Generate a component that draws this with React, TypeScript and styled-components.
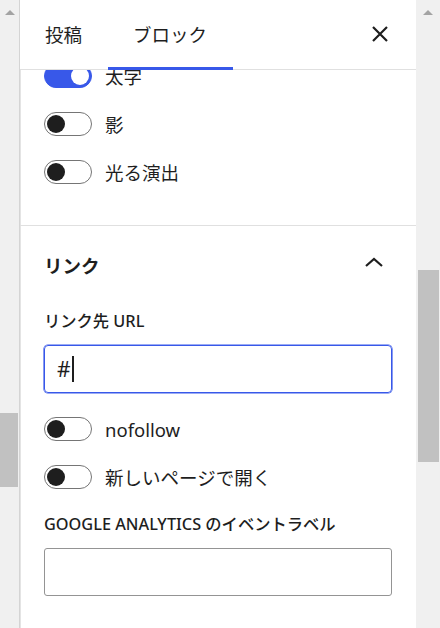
import styled, { createGlobalStyle } from 'styled-components';

const blue = '#3858e9';
const ink = '#1e1e1e';
const rule = '#e0e0e0';
const track = '#f0f0f0';
const thumb = '#c1c1c1';

const GlobalStyle = createGlobalStyle`
	html, body {
		margin: 0;
		padding: 0;
		background: #ffffff;
	}
	body {
		font-family: 'Noto Sans', 'Noto Sans CJK JP', sans-serif;
		color: ${ink};
	}
`;

const Page = styled.div`
	display: flex;
	width: 440px;
	height: 628px;
	overflow: hidden;
`;

const ScrollTrack = styled.div<{ $width: number }>`
	display: flex;
	flex-direction: column;
	align-items: center;
	width: ${(p) => p.$width}px;
	flex-shrink: 0;
	background: ${track};
`;

const Arrow = styled.div`
	margin-top: 10px;
	width: 0;
	height: 0;
	border-left: 5px solid transparent;
	border-right: 5px solid transparent;
	border-bottom: 5px solid #a3a3a3;
`;

const Thumb = styled.div<{ $top: number; $height: number; $inset: string }>`
	margin-top: ${(p) => p.$top}px;
	height: ${(p) => p.$height}px;
	align-self: stretch;
	margin-left: ${(p) => p.$inset};
	margin-right: 1px;
	background: ${thumb};
`;

const Panel = styled.aside`
	flex: 1;
	display: flex;
	flex-direction: column;
	background: #ffffff;
	border-left: 1px solid #d4d4d4;
	box-shadow: inset 1px 0 0 #e4e4e4;
	min-width: 0;
`;

const Header = styled.div`
	display: flex;
	align-items: stretch;
	height: 70px;
	flex-shrink: 0;
	box-shadow: inset 0 -1px 0 ${rule};
	position: relative;
	z-index: 1;
	background: #ffffff;
`;

const Tab = styled.button<{ $active?: boolean }>`
	border: 0;
	background: transparent;
	padding: 0 26px 2px 25px;
	font-family: inherit;
	font-size: 18.5px;
	color: ${ink};
	cursor: pointer;
	box-shadow: ${(p) => (p.$active ? `inset 0 -3px 0 ${blue}` : 'none')};
`;

const CloseButton = styled.button`
	margin-left: auto;
	width: 72px;
	border: 0;
	background: transparent;
	display: flex;
	align-items: center;
	justify-content: center;
	padding: 0 0 2px 0;
	cursor: pointer;
`;

const Body = styled.div`
	flex: 1;
	overflow: hidden;
`;

const Section = styled.section<{ $scrolled?: number }>`
	margin-top: ${(p) => (p.$scrolled ? -p.$scrolled : 0)}px;
	padding: 0 24px 29px;
	border-bottom: 1px solid ${rule};
`;

const LinkSection = styled.section`
	padding: 0 24px;
`;

const Row = styled.label`
	display: flex;
	align-items: center;
	gap: 13px;
	height: 48px;
	font-size: 18.5px;
	cursor: pointer;
`;

const Switch = styled.span<{ $on?: boolean }>`
	display: flex;
	align-items: center;
	justify-content: ${(p) => (p.$on ? 'flex-end' : 'flex-start')};
	box-sizing: border-box;
	width: 48px;
	height: 24px;
	padding: 0 2px;
	border-radius: 12px;
	border: 1px solid ${(p) => (p.$on ? blue : '#757575')};
	background: ${(p) => (p.$on ? blue : '#ffffff')};
	flex-shrink: 0;
`;

const Knob = styled.span<{ $on?: boolean }>`
	width: 18px;
	height: 18px;
	border-radius: 50%;
	background: ${(p) => (p.$on ? '#ffffff' : ink)};
`;

const TitleRow = styled.div`
	display: flex;
	align-items: center;
	justify-content: space-between;
	height: 78px;
	padding-right: 6px;
`;

const Title = styled.h2`
	margin: 0;
	font-size: 18.5px;
	font-weight: 700;
`;

const FieldLabel = styled.div<{ $gap: number }>`
	margin-top: ${(p) => p.$gap}px;
	height: 20px;
	line-height: 20px;
	font-size: 16.3px;
	font-weight: 500;
`;

const Field = styled.div<{ $focused?: boolean }>`
	display: flex;
	align-items: center;
	box-sizing: border-box;
	margin-top: 14px;
	height: 48px;
	padding: 0 12px;
	border-radius: ${(p) => (p.$focused ? 4 : 3)}px;
	border: 1px solid ${(p) => (p.$focused ? blue : '#949494')};
	box-shadow: ${(p) => (p.$focused ? `0 0 0 0.6px ${blue}` : 'none')};
	font-size: 21px;
`;

const Caret = styled.span`
	width: 2px;
	height: 26px;
	margin-left: 1px;
	background: ${ink};
`;

const Toggles = styled.div`
	margin-top: 12px;
`;

const ToggleRow = ({ label, on }: { label: string; on?: boolean }) => (
	<Row>
		<Switch $on={on}>
			<Knob $on={on} />
		</Switch>
		{label}
	</Row>
);

const App = () => {
	return (
		<Page>
			<GlobalStyle />
			<ScrollTrack $width={19}>
				<Arrow />
				<Thumb $top={398} $height={74} $inset="0px" />
			</ScrollTrack>
			<Panel>
				<Header>
					<Tab>投稿</Tab>
					<Tab $active>ブロック</Tab>
					<CloseButton aria-label="閉じる">
						<svg width="24" height="24" viewBox="0 0 24 24">
							<path d="M5 5 L19 19 M19 5 L5 19" stroke={ink} strokeWidth="2.2" fill="none" />
						</svg>
					</CloseButton>
				</Header>
				<Body>
					<Section $scrolled={18}>
						<ToggleRow label="太字" on />
						<ToggleRow label="影" />
						<ToggleRow label="光る演出" />
					</Section>
					<LinkSection>
						<TitleRow>
							<Title>リンク</Title>
							<svg width="24" height="24" viewBox="0 0 24 24">
								<path d="M4 13 L12 6 L20 13" stroke={ink} strokeWidth="2.2" fill="none" />
							</svg>
						</TitleRow>
						<FieldLabel $gap={7}>リンク先 URL</FieldLabel>
						<Field $focused>
							#<Caret />
						</Field>
						<Toggles>
							<ToggleRow label="nofollow" />
							<ToggleRow label="新しいページで開く" />
						</Toggles>
						<FieldLabel $gap={13}>GOOGLE ANALYTICS のイベントラベル</FieldLabel>
						<Field />
					</LinkSection>
				</Body>
			</Panel>
			<ScrollTrack $width={24}>
				<Arrow />
				<Thumb $top={255} $height={192} $inset="2px" />
			</ScrollTrack>
		</Page>
	);
};

export default App;
